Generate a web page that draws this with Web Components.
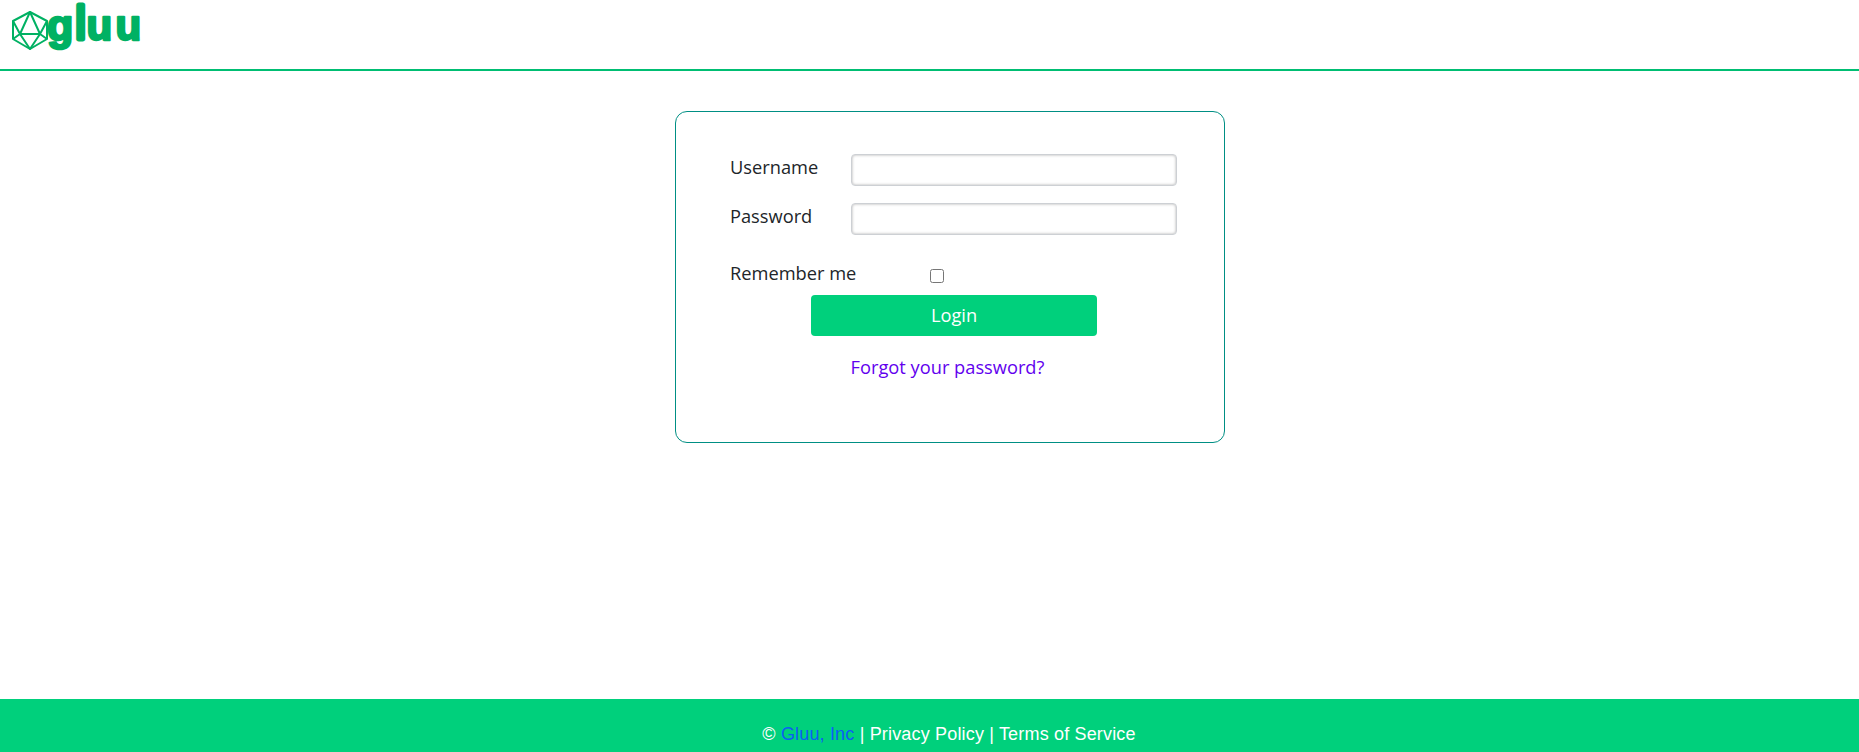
<!DOCTYPE html>
<html lang="en">
<head>
<meta charset="utf-8">
<title>Gluu</title>
<style>
  html, body { margin: 0; height: 100%; }
  body { display: flex; flex-direction: column; height: 752px; overflow: hidden; background: #fff; }
  main { display: flex; justify-content: center; padding-left: 41px; flex: 1; }
</style>
</head>
<body>
<gluu-header></gluu-header>
<main>
  <gluu-card>
    <gluu-field label="Username"></gluu-field>
    <gluu-field label="Password" type="password"></gluu-field>
    <gluu-remember label="Remember me"></gluu-remember>
    <gluu-button>Login</gluu-button>
    <gluu-link href="#">Forgot your password?</gluu-link>
  </gluu-card>
</main>
<gluu-footer></gluu-footer>

<script>
class GluuHeader extends HTMLElement {
  constructor() {
    super();
    this.attachShadow({mode: 'open'});
    this.shadowRoot.innerHTML = `
      <style>
        :host { display: flex; height: 69px; padding-left: 10px; border-bottom: 2px solid #00be73; flex: none; }
        svg { display: block; overflow: visible; }
        text { font-family: "Liberation Sans", sans-serif; font-weight: 700; fill: #00b163; stroke: #00b163; stroke-width: 2.5px; stroke-linejoin: round; stroke-linecap: round; }
        .tall { font-weight: 400; stroke-width: 5px; }
      </style>
      <svg width="132" height="56" viewBox="0 0 132 56" aria-label="Gluu">
        <g fill="none" stroke="#00b163" stroke-width="2" stroke-linejoin="round">
          <path d="M20 12 L37 21 L37 39 L20 49 L3 39 L3 21 Z"/>
          <path d="M20 12 L10 34 L30 34 Z"/>
          <path d="M3 21 L10 34 L3 39 M37 21 L30 34 L37 39"/>
          <path d="M10 34 L20 49 L30 34"/>
        </g>
        <text y="40"><tspan x="37" font-size="43">g</tspan><tspan class="tall" x="65.5" y="39" font-size="46">l</tspan><tspan x="76.5" y="40" font-size="42">u</tspan><tspan x="105.5" font-size="42">u</tspan></text>
      </svg>`;
  }
}

class GluuCard extends HTMLElement {
  constructor() {
    super();
    this.attachShadow({mode: 'open'});
    this.shadowRoot.innerHTML = `
      <style>
        :host { display: flex; flex-direction: column; box-sizing: border-box; width: 550px; height: 332px; margin-top: 40px; padding: 42px 47px 0 54px; border: 1px solid #008f84; border-radius: 12px; font: 18.25px "Open Sans", sans-serif; color: #212529; flex: none; }
      </style>
      <slot></slot>`;
  }
}

class GluuField extends HTMLElement {
  constructor() {
    super();
    this.attachShadow({mode: 'open'});
    this.shadowRoot.innerHTML = `
      <style>
        :host { display: flex; height: 32px; margin-bottom: 17px; }
        label { width: 121px; flex: none; line-height: 24px; margin-top: 1px; }
        input { flex: 1; min-width: 0; box-sizing: border-box; height: 32px; margin: 0; padding: 0 8px; border: 1px solid #cdd0d4; border-radius: 4px; background: #fff; box-shadow: inset 0 0 3px rgba(0,0,0,.32); outline: none; }
      </style>
      <label></label><input>`;
  }
  connectedCallback() {
    this.shadowRoot.querySelector('label').textContent = this.getAttribute('label');
    this.shadowRoot.querySelector('input').type = this.getAttribute('type') || 'text';
  }
}

class GluuRemember extends HTMLElement {
  constructor() {
    super();
    this.attachShadow({mode: 'open'});
    this.shadowRoot.innerHTML = `
      <style>
        :host { display: flex; height: 24px; margin-top: 9px; }
        label { width: 200px; flex: none; line-height: 24px; }
        input { width: 14px; height: 14px; margin: 8px 0 0; }
      </style>
      <label></label><input type="checkbox">`;
  }
  connectedCallback() {
    this.shadowRoot.querySelector('label').textContent = this.getAttribute('label');
  }
}

class GluuButton extends HTMLElement {
  constructor() {
    super();
    this.attachShadow({mode: 'open'});
    this.shadowRoot.innerHTML = `
      <style>
        :host { display: block; margin: 10px 0 0 81px; width: 286px; }
        button { display: block; width: 100%; height: 41px; border: 0; border-radius: 4px; background: #00d07c; color: #fff; font: inherit; padding: 0 0 2px; }
      </style>
      <button><slot></slot></button>`;
  }
}

class GluuLink extends HTMLElement {
  constructor() {
    super();
    this.attachShadow({mode: 'open'});
    this.shadowRoot.innerHTML = `
      <style>
        :host { display: block; text-align: center; margin: 19px 12px 0 0; line-height: 24px; }
        a { color: #6200ee; text-decoration: none; }
      </style>
      <a><slot></slot></a>`;
  }
  connectedCallback() {
    this.shadowRoot.querySelector('a').href = this.getAttribute('href') || '#';
  }
}

class GluuFooter extends HTMLElement {
  constructor() {
    super();
    this.attachShadow({mode: 'open'});
    this.shadowRoot.innerHTML = `
      <style>
        :host { display: block; flex: none; box-sizing: border-box; height: 53px; padding: 23px 0 0 39px; background: #00d07c; color: #fff; text-align: center; font: 18px/24px "Liberation Sans", Arial, sans-serif; letter-spacing: .17px; }
        a { color: inherit; text-decoration: none; }
        a.brand { color: #0d5ef5; }
      </style>
      &copy; <a class="brand" href="#">Gluu, Inc</a> | <a href="#">Privacy Policy</a> | <a href="#">Terms of Service</a>`;
  }
}

customElements.define('gluu-header', GluuHeader);
customElements.define('gluu-card', GluuCard);
customElements.define('gluu-field', GluuField);
customElements.define('gluu-remember', GluuRemember);
customElements.define('gluu-button', GluuButton);
customElements.define('gluu-link', GluuLink);
customElements.define('gluu-footer', GluuFooter);
</script>
</body>
</html>
